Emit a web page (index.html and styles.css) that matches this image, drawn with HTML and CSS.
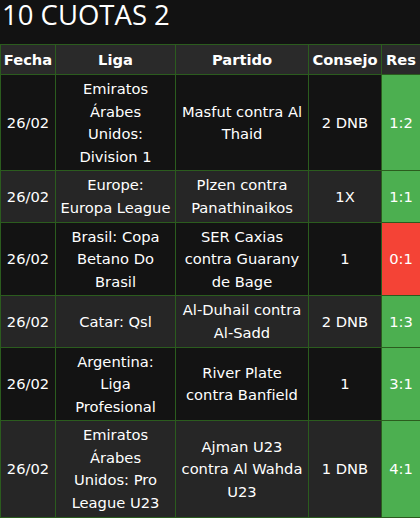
FILE: index.html
```html
<!DOCTYPE html>
<html lang="es">
<head>
<meta charset="utf-8">
<link rel="stylesheet" href="styles.css">
</head>
<body>
<h1 class="title">10 CUOTAS 2</h1>
<table class="tips">
  <colgroup>
    <col class="c-fecha"><col class="c-liga"><col class="c-partido"><col class="c-consejo"><col class="c-res">
  </colgroup>
  <thead>
    <tr><th>Fecha</th><th>Liga</th><th>Partido</th><th>Consejo</th><th>Res</th></tr>
  </thead>
  <tbody>
    <tr class="dark"><td>26/02</td><td>Emiratos<br>Árabes<br>Unidos:<br>Division 1</td><td>Masfut contra Al<br>Thaid</td><td>2 DNB</td><td class="win">1:2</td></tr>
    <tr class="light"><td>26/02</td><td>Europe:<br>Europa League</td><td>Plzen contra<br>Panathinaikos</td><td>1X</td><td class="win">1:1</td></tr>
    <tr class="dark"><td>26/02</td><td>Brasil: Copa<br>Betano Do<br>Brasil</td><td>SER Caxias<br>contra Guarany<br>de Bage</td><td>1</td><td class="loss">0:1</td></tr>
    <tr class="light"><td>26/02</td><td>Catar: Qsl</td><td>Al-Duhail contra<br>Al-Sadd</td><td>2 DNB</td><td class="win">1:3</td></tr>
    <tr class="dark"><td>26/02</td><td>Argentina:<br>Liga<br>Profesional</td><td>River Plate<br>contra Banfield</td><td>1</td><td class="win">3:1</td></tr>
    <tr class="light"><td>26/02</td><td>Emiratos<br>Árabes<br>Unidos: Pro<br>League U23</td><td>Ajman U23<br>contra Al Wahda<br>U23</td><td>1 DNB</td><td class="win">4:1</td></tr>
  </tbody>
</table>
</body>
</html>
```

FILE: styles.css
```css
html, body {
  margin: 0;
  padding: 0;
  background: #121212;
  color: #ffffff;
}
body {
  width: 420px;
}
.title {
  margin: 0 0 14px 0;
  padding-left: 2px;
  font-family: "Open Sans", sans-serif;
  font-weight: 400;
  font-size: 27.5px;
  line-height: 30px;
  color: #ffffff;
}
.tips {
  width: 420px;
  border-collapse: collapse;
  table-layout: fixed;
  font-family: "DejaVu Sans", sans-serif;
  font-size: 14.7px;
  line-height: 22.5px;
}
.c-fecha { width: 55px; }
.c-liga { width: 120px; }
.c-partido { width: 133px; }
.c-consejo { width: 73px; }
.c-res { width: 39px; }
.tips th, .tips td {
  border: 1px solid #2b5c1e;
  text-align: center;
  vertical-align: middle;
  padding: 3px 0 2.25px;
  white-space: nowrap;
}
.tips th {
  background: #2a2a2a;
  font-weight: bold;
  padding: 3.5px 0 3px;
}
.dark td { background: #131313; }
.light td { background: #262626; }
.tips td.win { background: #4caf50; }
.tips td.loss { background: #f44336; }
```
